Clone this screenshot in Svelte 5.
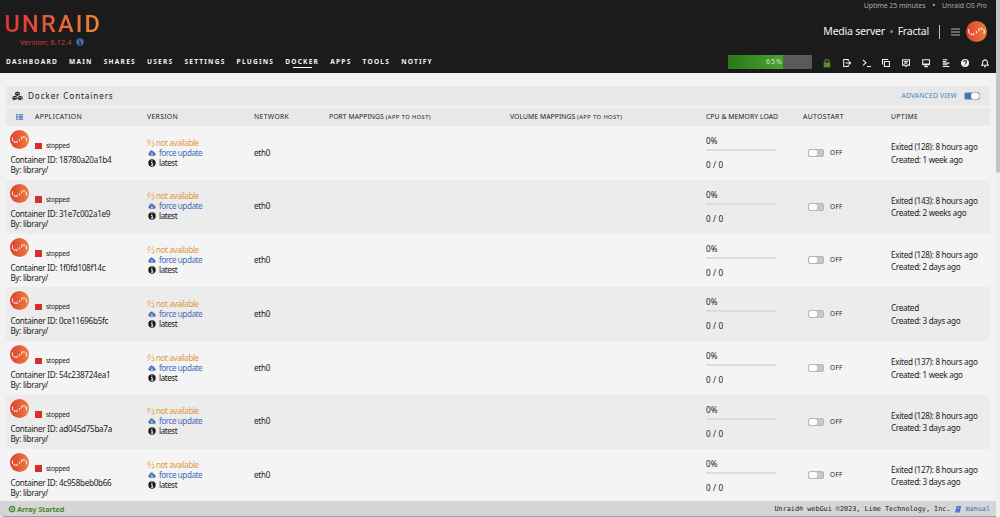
<script>
    let menu = ["Dashboard", "Main", "Shares", "Users", "Settings", "Plugins", "Docker", "Apps", "Tools", "Notify"];
    let active = "Docker";
    let usage = 65;
    let advanced = true;

    let containers = [
        { id: "18780a20a1b4", state: "Exited (128): 8 hours ago", created: "1 week ago", autostart: false },
        { id: "31e7c002a1e9", state: "Exited (143): 8 hours ago", created: "2 weeks ago", autostart: false },
        { id: "1f0fd108f14c", state: "Exited (128): 8 hours ago", created: "2 days ago", autostart: false },
        { id: "0ce11696b5fc", state: "Created", created: "3 days ago", autostart: false },
        { id: "54c238724ea1", state: "Exited (137): 8 hours ago", created: "1 week ago", autostart: false },
        { id: "ad045d75ba7a", state: "Exited (128): 8 hours ago", created: "3 days ago", autostart: false },
        { id: "4c958beb0b66", state: "Exited (127): 8 hours ago", created: "3 days ago", autostart: false }
    ];
</script>

{#snippet badge()}
    <svg class="badge" viewBox="0 0 20 20">
        <defs>
            <linearGradient id="orange" x1="0" y1="0.5" x2="1" y2="0.5">
                <stop offset="0" stop-color="#dc4032" />
                <stop offset="1" stop-color="#ee8040" />
            </linearGradient>
        </defs>
        <circle cx="10" cy="10" r="10" fill="url(#orange)" />
        <path d="M2.6 7.8v3.8M5 11.6v1.9M7.4 11.4v2.3M9.9 9.6v2.2M12.3 7v3M14.7 6.4v1.9M17.3 8.2v4" stroke="#fff" stroke-width="0.95" />
        <path d="M2.6 11Q4.6 13.8 7.4 12.8M12.3 7.6q2.9-2 5 2" fill="none" stroke="#ffe6dc" stroke-width="0.6" />
    </svg>
{/snippet}

{#snippet info()}
    <svg class="info" viewBox="0 0 8 8">
        <circle cx="4" cy="4" r="3.7" fill="currentColor" />
        <path d="M3.9 1.2v1.2M3 3.5h1.2v2.7M2.9 6.2h2.4" fill="none" stroke="var(--dot)" stroke-width="1" />
    </svg>
{/snippet}

<div class="page">
    <header>
        <div class="brand">
            <div class="logo">UNRAID</div>
            <div class="os-version">Version: 6.12.4 {@render info()}</div>
        </div>

        <div class="server">
            <div class="uptime"><span>Uptime 25 minutes</span><b>•</b><span>Unraid OS <i>Pro</i></span></div>
            <div class="server-name">
                <span>Media server</span><b>•</b><span>Fractal</span>
                <span class="divider"></span>
                <svg class="burger" viewBox="0 0 9 8"><path d="M0 1h9M0 4h9M0 7h9" stroke="#ccc" stroke-width="0.9" /></svg>
                {@render badge()}
            </div>
        </div>

        <nav>
            {#each menu as item}
                <a href="#{item}" class:active={item === active}>{item}</a>
            {/each}
        </nav>

        <div class="tools">
            <div class="usage"><div style="width: {usage}%"><span>{usage}%</span></div></div>
            <svg class="lock" viewBox="0 0 10 10"><path d="M3 5V3.4a2 2 0 0 1 4 0V5" /><rect x="2.2" y="5" width="5.6" height="3.8" fill="#5d8f2f" /></svg>
            <svg viewBox="0 0 10 10"><path d="M6.2 3V1.5H1.7v7h4.5V7M3.5 5h4.7M6.8 3.3L8.6 5 6.8 6.7" /></svg>
            <svg viewBox="0 0 10 10"><path d="M1 2l3 2.7-3 2.7M5 8.4h4" /></svg>
            <svg viewBox="0 0 10 10"><path d="M1.5 6.5v-5h5.7M3.4 3.4h5v5h-5z" /></svg>
            <svg viewBox="0 0 10 10"><path d="M1.6 1.7h6.9v5.4H6.2L5 8.5 3.8 7.1H1.6zM3.2 3.6h3.7M3.2 5.2h3" /></svg>
            <svg viewBox="0 0 10 10"><path d="M1.7 1.7h6.8v4.9H1.7zM2 6h6.3M3.3 8.6h3.6M5 6.5v2" /></svg>
            <svg viewBox="0 0 10 10"><path d="M1.8 1.7h4.6M1.8 3.4h3.4M1.8 5.1h6.6M1.8 6.8h4.6M1.8 8.4h6.6" /></svg>
            <svg viewBox="0 0 10 10"><circle cx="5" cy="5" r="3.5" fill="#f2f2f2" /><path class="mark" d="M3.7 4q0-1.4 1.4-1.4T6.4 4 5 5.5M5 6.5v1" /></svg>
            <svg viewBox="0 0 10 10"><path d="M1.7 7.3h6.6L7.4 6V4.2Q7.1 2 5 2T2.6 4.2V6zM5 1v1M4 8.7h2" /></svg>
        </div>
    </header>

    <main>
        <div class="title">
            <svg class="cubes" viewBox="0 0 11 10">
                <path d="M5.5.4l2.4 1v2.5l-2.4 1-2.4-1V1.4zM2.8 4.7l2.4 1v2.5l-2.4 1-2.4-1V5.7zM8.2 4.7l2.4 1v2.5l-2.4 1-2.4-1V5.7z" fill="#222" />
                <path d="M3.6 1.8l1.9.8 1.9-.8M.9 6.1l1.9.8 1.9-.8M6.3 6.1l1.9.8 1.9-.8M6 4.2l1.5-.7M3.2 8.6l1.6-.7M8.6 8.6l1.6-.7" fill="none" stroke="#e8e8e8" stroke-width="0.6" />
            </svg>
            <h1>Docker Containers</h1>
            <span class="view">Advanced View</span>
            <span class="switch" class:on={advanced}></span>
        </div>

        <div class="row head">
            <svg class="list" viewBox="0 0 8 6"><path d="M0 .9h1.8M0 3h1.8M0 5.1h1.8M2.6.9H7M2.6 3H7M2.6 5.1H7" stroke="#486dba" stroke-width="1.4" /></svg>
            <span>Application</span>
            <span>Version</span>
            <span>Network</span>
            <span class="tight">Port Mappings <small>(App to Host)</small></span>
            <span class="tight">Volume Mappings <small>(App to Host)</small></span>
            <span class="tight">CPU & Memory load</span>
            <span>Autostart</span>
            <span>Uptime</span>
        </div>

        {#each containers as ct}
            <div class="row">
                <div class="app">
                    <div class="state">{@render badge()}<span class="square"></span><span>stopped</span></div>
                    <div>Container ID: {ct.id}</div>
                    <div>By: library/</div>
                </div>
                <div class="version">
                    <div class="missing">
                        <svg viewBox="0 0 8 8"><path d="M3.3 1.4L2 .8.8 2l.4 1.8 1.5 1.5M4.6 6.6l1.5.7L7.2 6l-.5-1.7L4.8 2.6M1 6.7l1-1M5.7 1.6l.6-1M3 2.9l1.2 1.2" fill="none" stroke="currentColor" stroke-width="0.9" /></svg>
                        <span>not available</span>
                    </div>
                    <div class="force">
                        <svg viewBox="0 0 9 8"><path d="M2.2 7.1Q.3 6.8.4 5.2.5 3.9 1.7 3.5 1.7 1.3 3.8 1.1q1.6-.1 2.2 1.4 1.6-.2 1.6 1.5 1.2.4 1 1.7-.2 1.4-1.6 1.4z" fill="currentColor" /><path d="M4.4 3v3M3.1 4.8l1.3 1.4 1.3-1.4" fill="none" stroke="#f4f4f4" stroke-width="0.7" /></svg>
                        <span>force update</span>
                    </div>
                    <div class="latest">{@render info()}<span>latest</span></div>
                </div>
                <div class="network">eth0</div>
                <div></div>
                <div></div>
                <div class="load">
                    <div>0%</div>
                    <div class="bar"></div>
                    <div>0 / 0</div>
                </div>
                <div class="autostart">
                    <span class="switch" class:on={ct.autostart}></span>
                    <span>{ct.autostart ? "ON" : "OFF"}</span>
                </div>
                <div class="times">
                    <div>{ct.state}</div>
                    <div>Created: {ct.created}</div>
                </div>
            </div>
        {/each}
    </main>

    <footer>
        <svg viewBox="0 0 8 8"><circle cx="4" cy="4" r="2.7" fill="none" stroke="#4f8a24" stroke-width="1.3" /><path d="M3.1 2.4L5.7 4 3.1 5.6z" fill="#4f8a24" /></svg>
        <strong>Array Started</strong>
        <span class="copy">Unraid® webGui ©2023, Lime Technology, Inc.</span>
        <svg viewBox="0 0 8 8"><path d="M2.6.9h4.5L5.9 6.8H1.4z" fill="#486dba" /><path d="M3.4 2.4h2.3M3.1 3.8h2.3" stroke="#d4d5d7" stroke-width="0.5" /><path d="M1.2 6q-.4 1.3.7 1.3h3.9" fill="none" stroke="#486dba" stroke-width="0.6" /></svg>
        <a href="#manual">manual</a>
    </footer>

    <div class="scroll"><div></div></div>
</div>

<style>
    :global(body){
        margin: 0;
        overflow: hidden;
    }

    .page{
        display: grid;
        grid-template-columns: 996px 4px;
        grid-template-rows: 73px 428px 16px;
        width: 1000px;
        height: 517px;
        background-color: #f2f2f2;
        color: #1c1b1b;
        font-family: "Noto Sans", "Open Sans", sans-serif;
        font-size: 8.1px;
        line-height: 10px;
        letter-spacing: -0.28px;
    }

    .page svg{
        display: block;
        flex: none;
    }

    a{
        color: inherit;
        text-decoration: none;
    }

    /* header */
    header{
        display: grid;
        grid-template-columns: 1fr auto;
        grid-template-rows: 50px 23px;
        background-color: #1c1b1b;
        color: #f2f2f2;
    }

    .brand{
        padding: 13px 0 0 4.5px;
    }

    .logo{
        width: 100px;
        height: 23px;
        font-family: Roboto, sans-serif;
        font-size: 23.5px;
        font-weight: 500;
        line-height: 23px;
        letter-spacing: 2.2px;
        background: linear-gradient(90deg, #e03237, #ee8a3c);
        background-clip: text;
        color: transparent;
    }

    .os-version{
        display: flex;
        align-items: center;
        margin-left: 15.5px;
        padding-top: 1px;
        font-size: 7.5px;
        letter-spacing: 0;
        color: #c53c3e;
    }

    .info{
        width: 8px;
        height: 8px;
        --dot: #f4f4f4;
    }

    .os-version .info{
        margin-left: 4px;
        color: #486dba;
        --dot: #1c1b1b;
    }

    .server{
        padding-right: 9px;
    }

    .uptime{
        display: flex;
        justify-content: flex-end;
        height: 20px;
        padding-top: 1px;
        box-sizing: border-box;
        font-size: 7px;
        letter-spacing: -0.06px;
        color: #aaa;
    }

    .uptime b{
        margin: 0 7px;
    }

    .server-name{
        display: flex;
        align-items: center;
        justify-content: flex-end;
        height: 23px;
        font-size: 10.6px;
        line-height: 23px;
        letter-spacing: -0.26px;
    }

    .server-name b{
        margin: 0 5px;
        font-size: 8px;
        color: #999;
    }

    .divider{
        width: 1px;
        height: 14px;
        margin: 0 11px 0 10px;
        background-color: #bbb;
    }

    .burger{
        width: 9px;
        height: 8px;
        margin-right: 6px;
    }

    .server-name .badge{
        width: 21px;
        height: 21px;
    }

    nav{
        display: flex;
        gap: 11.1px;
        padding: 7px 0 0 6px;
        font-size: 6.6px;
        font-weight: 700;
        letter-spacing: 1.21px;
        text-transform: uppercase;
    }

    nav a{
        display: flex;
        flex-direction: column;
        align-items: center;
        height: 12px;
    }

    nav .active::after{
        content: "";
        width: 19px;
        height: 1px;
        background-color: #fff;
    }

    .tools{
        display: flex;
        justify-content: flex-end;
        padding: 5px 6px 0 0;
    }

    .tools svg{
        width: 10px;
        height: 10px;
        margin: 3px 0 0 9.75px;
        fill: none;
        stroke: #f2f2f2;
        stroke-width: 1.05;
    }

    .tools .lock{
        stroke: #5d8f2f;
    }

    .tools .mark{
        stroke: #1c1b1b;
    }

    .usage{
        width: 84px;
        height: 14px;
        background-color: #5a5a5a;
    }

    .usage div{
        height: 14px;
        background: linear-gradient(90deg, #2b781b, #4aa32f);
        font-size: 7px;
        line-height: 13px;
        letter-spacing: 1px;
        text-align: right;
        color: #d5e8cf;
    }

    /* docker table */
    main{
        overflow: hidden;
        padding: 13px 6px 0;
    }

    .title{
        display: flex;
        align-items: center;
        height: 20px;
        margin-bottom: 2px;
        padding: 0 10px 0 6px;
        background-color: #e8e8e8;
    }

    .cubes{
        width: 11px;
        height: 10px;
    }

    h1{
        margin: 0 auto 0 5px;
        font-size: 8.2px;
        font-weight: 400;
        letter-spacing: 0.85px;
    }

    .view{
        margin-right: 7px;
        font-size: 6.7px;
        letter-spacing: 0.2px;
        text-transform: uppercase;
        color: #4584b8;
    }

    .row{
        display: grid;
        grid-template-columns: 29px 112px 107px 75px 181px 196px 97px 88px 1fr;
        height: 53.75px;
        background-color: #f4f4f4;
        width: 984px;
    }

    .row:nth-child(even){
        background-color: #ececec;
    }

    .row.head{
        height: 18px;
        background-color: #e8e8e8;
        font-size: 6.8px;
        line-height: 18px;
        letter-spacing: 0.35px;
        text-transform: uppercase;
        white-space: nowrap;
    }

    .row .tight{
        letter-spacing: 0.06px;
    }

    small{
        font-size: 5.8px;
        letter-spacing: 0.4px;
    }

    .list{
        width: 8px;
        height: 6px;
        margin: 6px 0 0 10px;
    }

    .app{
        grid-column: span 2;
        padding: 4px 0 0 4.4px;
    }

    .state{
        display: flex;
        align-items: flex-start;
        height: 25px;
        font-size: 6.5px;
        letter-spacing: -0.2px;
    }

    .badge{
        width: 19px;
        height: 19px;
    }

    .square{
        width: 6.5px;
        height: 6.5px;
        margin: 12.5px 4px 0 6px;
        background-color: #d7302c;
    }

    .state span:last-child{
        margin-top: 11px;
    }

    .version{
        padding-top: 11.7px;
        letter-spacing: -0.44px;
    }

    .version div{
        display: flex;
        align-items: center;
        height: 10px;
    }

    .version svg{
        width: 8px;
        height: 8px;
        margin-right: 3px;
        margin-left: 1px;
    }

    .version .missing svg{
        margin: 0 1px 0 0;
    }

    .missing{
        color: #e09a42;
    }

    .force{
        color: #486dba;
    }

    .network{
        padding-top: 21.6px;
    }

    .load{
        padding-top: 10px;
        letter-spacing: 0.15px;
    }

    .bar{
        width: 70px;
        height: 2px;
        margin: 3px 0 9.2px;
        background-color: #dcdcdc;
    }

    .autostart{
        display: flex;
        align-items: center;
        gap: 6px;
        padding-left: 5px;
        font-size: 6.5px;
        letter-spacing: 0.3px;
    }

    .switch{
        display: flex;
        box-sizing: border-box;
        width: 16px;
        height: 8px;
        border: 0.5px solid #b5b5b5;
        border-radius: 2px;
        background-color: #c8c8c8;
    }

    .switch::before{
        content: "";
        width: 8px;
        border-radius: 2px;
        background-color: #fff;
    }

    .switch.on{
        justify-content: flex-end;
        background-color: #486dba;
    }

    .times{
        padding-top: 15.2px;
        line-height: 12.4px;
        letter-spacing: -0.29px;
        white-space: nowrap;
    }

    /* status bar */
    footer{
        display: flex;
        align-items: center;
        box-sizing: border-box;
        padding: 0 6px 0 8px;
        border-bottom: 1px solid #9a9f98;
        border-bottom-left-radius: 5px;
        background-color: #d4d5d7;
    }

    footer svg{
        width: 8px;
        height: 8px;
    }

    footer strong{
        margin-left: 1px;
        font-size: 7.4px;
        letter-spacing: -0.16px;
        color: #4f8a24;
    }

    .copy{
        margin: 0 4px 0 auto;
        font-family: "DejaVu Sans Mono", monospace;
        font-size: 6.8px;
        letter-spacing: 0;
    }

    footer a{
        margin-left: 3px;
        font-family: "DejaVu Sans Mono", monospace;
        font-size: 6.8px;
        letter-spacing: 0;
        color: #486dba;
    }

    .scroll{
        grid-column: 2;
        grid-row: 1 / 4;
        background-color: #f0f0f0;
    }

    .scroll div{
        height: 173px;
        background-color: #c4c4c4;
        border-radius: 0 0 2px 2px;
    }
</style>
